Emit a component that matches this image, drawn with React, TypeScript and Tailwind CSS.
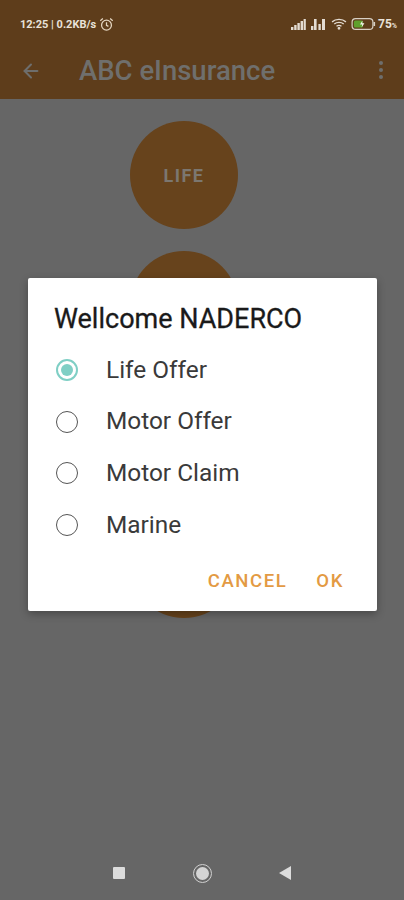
import React from 'react';
import { ArrowLeft } from 'lucide-react';

const options = ['Life Offer', 'Motor Offer', 'Motor Claim', 'Marine'];
const circles = ['LIFE', '', '', ''];

const SignalIcon: React.FC<{ gap?: boolean }> = ({ gap }) => (
  <svg width="15" height="12" viewBox="0 0 15 12" fill="#e4dcd2">
    {gap ? (
      <>
        <rect x="0" y="8" width="2.4" height="4" />
        <rect x="3" y="1" width="2.6" height="11" />
        <rect x="7.4" y="6" width="2.4" height="6" />
        <rect x="11" y="1" width="3" height="11" />
      </>
    ) : (
      <>
        <rect x="0" y="9" width="2.4" height="3" />
        <rect x="3.2" y="7" width="2.4" height="5" />
        <rect x="6.4" y="5" width="2.4" height="7" />
        <rect x="9.6" y="3" width="2.4" height="9" />
        <rect x="12.6" y="1" width="2.2" height="11" />
      </>
    )}
  </svg>
);

export default function App() {
  return (
    <div className="relative w-[404px] h-[900px] overflow-hidden bg-[#666666] flex flex-col font-['Roboto',sans-serif]">
      <div className="h-[99px] shrink-0 bg-[#5e3d1b] flex flex-col">
        <div className="h-[50px] pl-5 pr-[7px] pt-[15px] flex items-start justify-between text-[#e9e2d9]">
          <div className="flex items-center gap-[3px] h-[18px]">
            <span className="text-[11px] font-bold leading-none">12:25 | 0.2KB/s</span>
            <svg width="15" height="15" viewBox="0 0 14 14" fill="none" stroke="#e4d5c0" strokeWidth="1.2">
              <circle cx="7" cy="7.6" r="4.6" />
              <path d="M7 5v2.8l1.8 1M1.2 3.4l2.4-2M12.8 3.4l-2.4-2" />
            </svg>
          </div>
          <div className="flex items-center h-[18px]">
            <SignalIcon />
            <span className="w-[5px]" />
            <SignalIcon gap />
            <svg className="ml-[5px]" width="16" height="12" viewBox="0 0 17 13" fill="none" stroke="#e4dcd2" strokeWidth="1.5">
              <path d="M1 4.2c4-3.6 11-3.6 15 0M3.4 6.6c2.8-2.4 7.4-2.4 10.2 0M5.8 9c1.4-1 4-1 5.4 0" />
              <circle cx="8.5" cy="11.2" r="0.8" fill="#e4dcd2" />
            </svg>
            <svg className="ml-[4px]" width="25" height="12" viewBox="0 0 24 12">
              <rect x="0.6" y="0.6" width="20.8" height="10.8" rx="3.5" fill="none" stroke="#d8d0c4" strokeWidth="1.2" />
              <rect x="2.4" y="2.4" width="9" height="7.2" rx="1.5" fill="#5fa02c" />
              <rect x="22" y="4" width="1.6" height="4" fill="#d8d0c4" />
              <path d="M11 2.5 8.5 6.5h2.2l-.6 3 2.8-4.2h-2.2z" fill="#f4f4ec" />
            </svg>
            <span className="text-[12px] font-bold leading-none ml-[2px]">75<span className="text-[7px]">%</span></span>
          </div>
        </div>
        <div className="h-[41px] pl-[20px] pr-[21px] flex items-center text-[#6e6e6c]">
          <ArrowLeft size={22} strokeWidth={2.2} />
          <span className="ml-[37px] text-[27.5px] font-medium leading-none text-[#6f6f6d]">ABC eInsurance</span>
          <div className="ml-auto flex flex-col gap-[3px] -mt-[1px]">
            <span className="w-[4px] h-[4px] rounded-full bg-[#6e6e6c]" />
            <span className="w-[4px] h-[4px] rounded-full bg-[#6e6e6c]" />
            <span className="w-[4px] h-[4px] rounded-full bg-[#6e6e6c]" />
          </div>
        </div>
      </div>

      <div className="pt-[22px] pr-[36px] flex flex-col items-center gap-[21.7px]">
        {circles.map((label, i) => (
          <div key={i} className="w-[108px] h-[108px] rounded-full bg-[#67431c] flex items-center justify-center">
            <span className="text-[18px] font-bold tracking-[1.5px] leading-none pt-[2px] text-[#7c7770]">{label}</span>
          </div>
        ))}
      </div>

      <div className="absolute left-[28px] top-[278px] w-[349px] h-[333px] bg-white rounded-[2px] shadow-[0_3px_8px_rgba(0,0,0,0.3)] flex flex-col">
        <div className="pl-[26px] pt-[25px] h-[66px] text-[27px] leading-[32px] font-normal text-[#1a1a1a] [-webkit-text-stroke:0.3px_#1a1a1a]">Wellcome NADERCO</div>
        <div className="flex flex-col">
          {options.map((o, i) => (
            <div key={o} className="h-[51.7px] pl-[28px] flex items-center">
              {i === 0 ? (
                <span className="w-[22px] h-[22px] rounded-full border-2 border-[#7fcfc5] flex items-center justify-center">
                  <span className="w-[12px] h-[12px] rounded-full bg-[#7fcfc5]" />
                </span>
              ) : (
                <span className="w-[22px] h-[22px] rounded-full border-[1.5px] border-[#555555]" />
              )}
              <span className="ml-[28px] text-[24.4px] leading-none text-[#3a3a3a]">{o}</span>
            </div>
          ))}
        </div>
        <div className="mt-[17px] pr-[33px] flex justify-end gap-[29px] text-[18.5px] font-medium tracking-[1.6px] text-[#e39a43]">
          <span>CANCEL</span>
          <span>OK</span>
        </div>
      </div>

      <div className="mt-auto h-[48px] px-[113px] pb-[6px] flex items-center justify-between">
        <span className="w-[12px] h-[12px] bg-[#dcdcdc] rounded-[1px]" />
        <span className="w-[19px] h-[19px] rounded-full border border-[#d0d0d0] flex items-center justify-center">
          <span className="w-[13px] h-[13px] rounded-full bg-[#d4d4d4]" />
        </span>
        <svg width="12" height="14" viewBox="0 0 12 14"><path d="M12 0v14L0 7z" fill="#dcdcdc" /></svg>
      </div>
    </div>
  );
}
